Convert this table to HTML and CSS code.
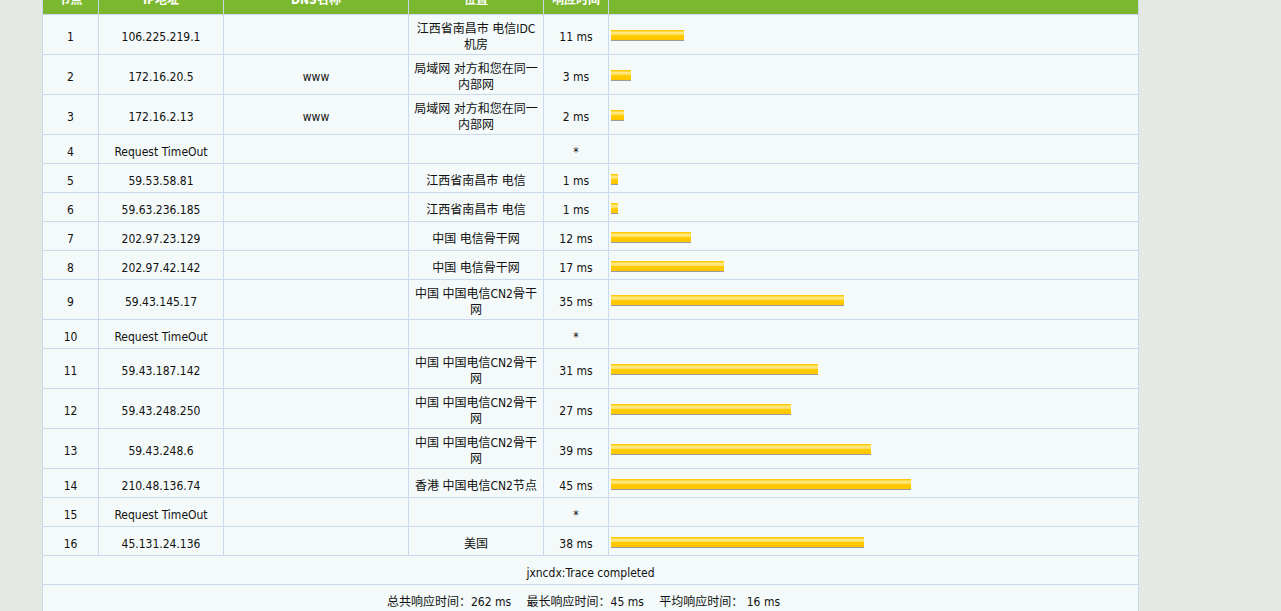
FILE: index.html
```html
<!DOCTYPE html>
<html lang="zh-CN">
<head>
<meta charset="UTF-8" />
<title>Traceroute</title>
<link rel="stylesheet" href="styles.css">
</head>
<body>
    <table id="trace">
        <colgroup>
            <col class="c-hop">
            <col class="c-ip">
            <col class="c-dns">
            <col class="c-loc">
            <col class="c-time">
            <col class="c-bar">
        </colgroup>
        <thead>
            <tr>
                <th>节点</th>
                <th>IP地址</th>
                <th>DNS名称</th>
                <th>位置</th>
                <th>响应时间</th>
                <th></th>
            </tr>
        </thead>
        <tbody id="hops"></tbody>
        <tfoot>
            <tr>
                <td colspan="6">jxncdx:Trace completed</td>
            </tr>
            <tr>
                <td colspan="6" class="summary">
                    <span>总共响应时间：262 ms</span>
                    <span>最长响应时间：45 ms</span>
                    <span>平均响应时间：&nbsp;16 ms</span>
                </td>
            </tr>
        </tfoot>
    </table>
    <script>
    const hops = [
        ['106.225.219.1', '', '江西省南昌市 电信IDC机房', 11],
        ['172.16.20.5', 'www', '局域网 对方和您在同一内部网', 3],
        ['172.16.2.13', 'www', '局域网 对方和您在同一内部网', 2],
        ['Request TimeOut', '', '', null],
        ['59.53.58.81', '', '江西省南昌市 电信', 1],
        ['59.63.236.185', '', '江西省南昌市 电信', 1],
        ['202.97.23.129', '', '中国 电信骨干网', 12],
        ['202.97.42.142', '', '中国 电信骨干网', 17],
        ['59.43.145.17', '', '中国 中国电信CN2骨干网', 35],
        ['Request TimeOut', '', '', null],
        ['59.43.187.142', '', '中国 中国电信CN2骨干网', 31],
        ['59.43.248.250', '', '中国 中国电信CN2骨干网', 27],
        ['59.43.248.6', '', '中国 中国电信CN2骨干网', 39],
        ['210.48.136.74', '', '香港 中国电信CN2节点', 45],
        ['Request TimeOut', '', '', null],
        ['45.131.24.136', '', '美国', 38]
    ];
    const maxTime = 45, maxBar = 300;
    const tbody = document.getElementById('hops');

    hops.forEach(function(hop, i) {
        var tr = document.createElement('tr');
        var time = hop[3];
        var bar = '';
        if (time !== null) {
            bar = '<div class="bar" style="width:' + Math.round(time / maxTime * maxBar) + 'px"></div>';
        }
        tr.innerHTML =
            '<td>' + (i + 1) + '</td>' +
            '<td>' + hop[0] + '</td>' +
            '<td>' + hop[1] + '</td>' +
            '<td>' + hop[2] + '</td>' +
            '<td>' + (time === null ? '*' : time + ' ms') + '</td>' +
            '<td class="graph">' + bar + '</td>';
        tbody.appendChild(tr);
    });
    </script>
</body>
</html>
```

FILE: styles.css
```css
*{
    font-family: "DejaVu Sans Condensed", "DejaVu Sans", "Noto Sans CJK SC", sans-serif;
}
body{
    margin: 0;
    background-color: #e5e9e3;
}
#trace{
    margin: -15px 0 0 42px;
    width: 1097px;
    table-layout: fixed;
    border-collapse: collapse;
    font-size: 12px;
    color: #111;
}
.c-hop{ width: 56px; }
.c-ip{ width: 125px; }
.c-dns{ width: 185px; }
.c-loc{ width: 135px; }
.c-time{ width: 65px; }
.c-bar{ width: 530px; }

#trace th,
#trace td{
    border: 1px solid #c9d9ee;
    text-align: center;
    line-height: 16px;
    padding: 6px 4px 1px;
}
#trace th{
    background-color: #7cb82f;
    color: white;
    height: 21px;
    padding: 3px 4px 4px;
}
#trace td{
    background-color: #f4fafa;
    height: 21px;
}
#trace td.graph{
    text-align: left;
    padding: 2px 2px 0;
}
.bar{
    height: 10px;
    border-bottom: 1px solid #9a9a9a;
    background: linear-gradient(#ffc800 0, #ffc800 1px, #ffeb8a 2px, #ffe066 45%, #ffcc00 55%, #ffc400 100%);
}
#trace td.summary{
    padding-right: 18px;
}
.summary span{
    margin: 0 6px;
}
```
